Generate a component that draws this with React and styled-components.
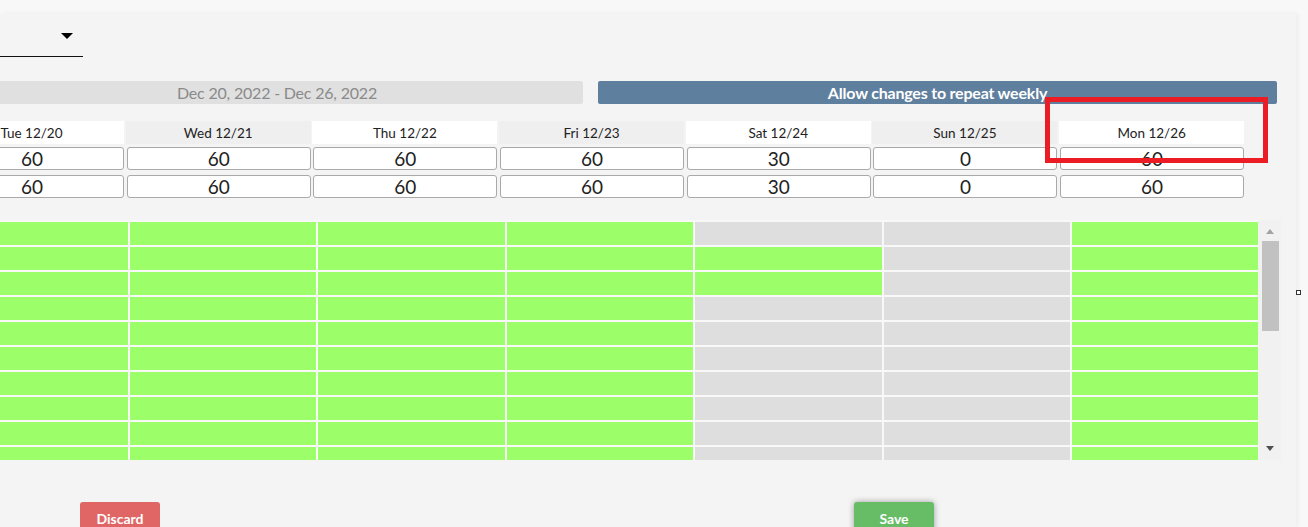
import React from "react";
import styled, { createGlobalStyle } from "styled-components";

const GlobalStyle = createGlobalStyle`
  html, body {
    margin: 0;
    padding: 0;
    background: #f8f8f8;
    font-family: "Lato", "Open Sans", sans-serif;
    overflow: hidden;
  }
`;

const days = [
  { label: "Tue 12/20", planned: 60, actual: 60 },
  { label: "Wed 12/21", planned: 60, actual: 60 },
  { label: "Thu 12/22", planned: 60, actual: 60 },
  { label: "Fri 12/23", planned: 60, actual: 60 },
  { label: "Sat 12/24", planned: 30, actual: 30 },
  { label: "Sun 12/25", planned: 0, actual: 0 },
  { label: "Mon 12/26", planned: 60, actual: 60 },
];

// which slots are open, per day (true = available)
const isOpen = (day, row) => {
  if (day === 5) return false;
  if (day === 4) return row === 1 || row === 2;
  return true;
};

const ROWS = 12;

const Schedule = () => {
  return (
    <Page>
      <GlobalStyle />
      <Panel>
        <Scroller>
          <Dropdown>
            <Caret />
          </Dropdown>

          <BarRow>
            <RangeBar>Dec 20, 2022 - Dec 26, 2022</RangeBar>
            <RepeatBar>Allow changes to repeat weekly</RepeatBar>
          </BarRow>

          <DayTable>
            {days.map((d, i) => (
              <DayHead key={d.label} $shaded={i % 2 === 1}>
                {d.label}
              </DayHead>
            ))}
            {days.map((d) => (
              <MinutesInput key={d.label + "p"} defaultValue={d.planned} />
            ))}
            {days.map((d) => (
              <MinutesInput key={d.label + "a"} defaultValue={d.actual} />
            ))}
          </DayTable>

          <SlotArea>
            <SlotGrid>
              {Array.from({ length: ROWS }).map((_, r) =>
                days.map((d, c) => (
                  <Slot key={`${r}-${c}`} $open={isOpen(c, r)} />
                ))
              )}
            </SlotGrid>
            <ScrollTrack>
              <ArrowUp />
              <Thumb />
              <ArrowDown />
            </ScrollTrack>
          </SlotArea>

          <ButtonRow>
            <ActionButton $tone="discard">Discard</ActionButton>
            <ActionButton $tone="save">Save</ActionButton>
          </ButtonRow>
        </Scroller>
      </Panel>
      <ResizeHandle />
      <Highlight />
    </Page>
  );
};

export default function App() {
  return <Schedule />;
}

const Page = styled.div`
  position: relative;
  width: 1308px;
  height: 527px;
  padding-top: 14px;
  box-sizing: border-box;
  overflow: hidden;
`;

const Panel = styled.div`
  width: 1296px;
  height: 513px;
  background: #f4f4f4;
  overflow: hidden;
  box-shadow: 2px 0 5px rgba(0, 0, 0, 0.05);
`;

/* content is scrolled 61px to the left */
const Scroller = styled.div`
  margin-left: -61px;
  width: 1360px;
  display: flex;
  flex-direction: column;
`;

const Dropdown = styled.div`
  width: 144px;
  height: 28px;
  margin-top: 14px;
  margin-left: -10px;
  border-bottom: 1px solid #111;
  display: flex;
  align-items: flex-start;
  justify-content: flex-end;
  padding-right: 10px;
  box-sizing: content-box;
`;

const Caret = styled.span`
  width: 0;
  height: 0;
  border-left: 6.5px solid transparent;
  border-right: 6.5px solid transparent;
  border-top: 6px solid #000;
  margin-top: 5px;
`;

const BarRow = styled.div`
  display: flex;
  gap: 15px;
  margin-top: 24px;
  margin-left: 32px;
`;

const Bar = styled.div`
  height: 23px;
  border-radius: 2px;
  display: flex;
  align-items: center;
  justify-content: center;
  font-size: 16px;
  letter-spacing: -0.2px;
`;

const RangeBar = styled(Bar)`
  width: 612px;
  background: #e0e0e0;
  color: #8a8a8a;
`;

const RepeatBar = styled(Bar)`
  width: 679px;
  background: #5f7f9e;
  color: #fff;
  font-weight: 700;
`;

const DayTable = styled.div`
  display: grid;
  grid-template-columns: repeat(7, 185px);
  column-gap: 1.7px;
  margin-top: 17px;
`;

const DayHead = styled.div`
  height: 23px;
  background: ${(p) => (p.$shaded ? "#efefef" : "#ffffff")};
  color: #222;
  font-size: 13.5px;
  display: flex;
  align-items: center;
  justify-content: center;
  margin-bottom: 3px;
`;

const MinutesInput = styled.input`
  height: 23px;
  box-sizing: border-box;
  width: calc(100% - 1px);
  margin: 0 0 5px 1px;
  border: 1px solid #a9a9a9;
  border-radius: 3px;
  background: #fff;
  color: #222;
  font-family: "Lato", sans-serif;
  font-size: 19px;
  text-align: center;
  padding: 0;
  outline: none;
`;

const SlotArea = styled.div`
  display: flex;
  height: 240px;
  margin-top: 17px;
  margin-left: 2.6px;
  overflow: hidden;
`;

const SlotGrid = styled.div`
  display: grid;
  grid-template-columns: repeat(7, 186.4px);
  grid-auto-rows: 23px;
  gap: 2px;
  padding-top: 2px;
  background: #f8f8f8;
  align-content: start;
`;

const Slot = styled.div`
  background: ${(p) => (p.$open ? "#9cff69" : "#dedede")};
`;

const ScrollTrack = styled.div`
  width: 23px;
  background: #f1f1f1;
  display: flex;
  flex-direction: column;
  align-items: flex-start;
`;

const ArrowUp = styled.span`
  width: 0;
  height: 0;
  margin: 9px 0 0 8px;
  border-left: 4.5px solid transparent;
  border-right: 4.5px solid transparent;
  border-bottom: 5px solid #a3a3a3;
`;

const Thumb = styled.div`
  width: 17px;
  height: 90px;
  margin: 7px 0 0 4px;
  background: #c1c1c1;
`;

const ArrowDown = styled.span`
  width: 0;
  height: 0;
  margin: auto 0 9px 8px;
  border-left: 4.5px solid transparent;
  border-right: 4.5px solid transparent;
  border-top: 5px solid #505050;
`;

const ButtonRow = styled.div`
  display: flex;
  gap: 694px;
  margin-top: 42px;
  margin-left: 141px;
`;

const ActionButton = styled.button`
  width: 80px;
  height: 34px;
  border: none;
  border-radius: 3px;
  padding: 0 0 2px;
  font-family: "Lato", sans-serif;
  font-weight: 700;
  font-size: 14px;
  color: #fff;
  background: ${(p) => (p.$tone === "save" ? "#66bd66" : "#e06666")};
  box-shadow: ${(p) =>
    p.$tone === "save" ? "0 0 6px rgba(0, 0, 0, 0.35)" : "none"};
`;

const ResizeHandle = styled.span`
  position: absolute;
  left: 1296px;
  top: 290px;
  width: 3px;
  height: 3px;
  border: 1px solid #333;
  background: #fff;
`;

const Highlight = styled.div`
  position: absolute;
  left: 1045px;
  top: 97px;
  width: 223px;
  height: 66px;
  box-sizing: border-box;
  border: 5px solid #ec1c24;
  pointer-events: none;
`;
